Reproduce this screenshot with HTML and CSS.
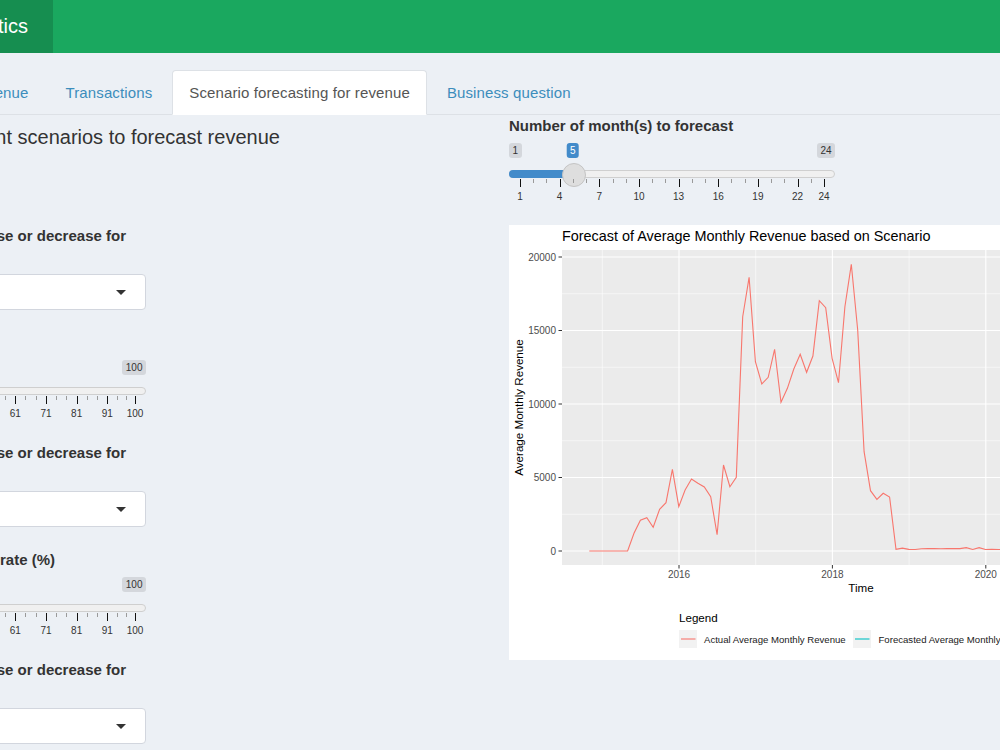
FILE: index.html
```html
<!DOCTYPE html>
<html lang="en">
<head>
  <meta charset="UTF-8" />
  <meta name="viewport" content="width=device-width, initial-scale=1.0"/>
  <title>Revenue Analytics</title>
  <link rel="stylesheet" href="styles.css">
</head>
<body>
  <div class="wrapper">
    <header class="main-header">
      <div class="logo">Analytics</div>
      <nav class="navbar"></nav>
    </header>

    <div class="content">
      <ul class="nav-tabs">
        <li><a href="#">Data overview</a></li>
        <li><a href="#">Revenue</a></li>
        <li><a href="#">Transactions</a></li>
        <li class="active"><a href="#">Scenario forecasting for revenue</a></li>
        <li><a href="#">Business question</a></li>
      </ul>

      <div class="tab-content">
        <div class="col-left">
          <h4 class="scenario-title">Choose from different scenarios to forecast revenue</h4>

          <div class="form-group">
            <label>Select percentage increase or decrease for average order value</label>
            <div class="select"><span>No change</span><span class="caret"></span></div>
          </div>

          <div class="form-group">
            <label>Customer growth (%)</label>
            <div class="slider" data-min="1" data-max="100" data-value="10" data-ticks="1,11,21,31,41,51,61,71,81,91,100">
              <div class="irs-labels"><span class="irs-box">1</span><span class="irs-box irs-single">10</span><span class="irs-box">100</span></div>
              <div class="irs-line"><span class="irs-bar"></span><span class="irs-handle"></span></div>
              <div class="irs-grid"></div>
            </div>
          </div>

          <div class="form-group">
            <label>Select percentage increase or decrease for purchase frequency</label>
            <div class="select"><span>No change</span><span class="caret"></span></div>
          </div>

          <div class="form-group">
            <label>Existing customer churn rate (%)</label>
            <div class="slider" data-min="1" data-max="100" data-value="10" data-ticks="1,11,21,31,41,51,61,71,81,91,100">
              <div class="irs-labels"><span class="irs-box">1</span><span class="irs-box irs-single">10</span><span class="irs-box">100</span></div>
              <div class="irs-line"><span class="irs-bar"></span><span class="irs-handle"></span></div>
              <div class="irs-grid"></div>
            </div>
          </div>

          <div class="form-group">
            <label>Select percentage increase or decrease for customer lifespan</label>
            <div class="select"><span>No change</span><span class="caret"></span></div>
          </div>
        </div>

        <div class="col-right">
          <div class="form-group">
            <label>Number of month(s) to forecast</label>
            <div class="slider" data-min="1" data-max="24" data-value="5" data-ticks="1,4,7,10,13,16,19,22,24">
              <div class="irs-labels"><span class="irs-box">1</span><span class="irs-box irs-single">5</span><span class="irs-box">24</span></div>
              <div class="irs-line"><span class="irs-bar"></span><span class="irs-handle"></span></div>
              <div class="irs-grid"></div>
            </div>
          </div>

          <div class="plot">
            <svg class="chart" width="660" height="435" viewBox="0 0 660 435">
              <text class="chart-title" x="53" y="16">Forecast of Average Monthly Revenue based on Scenario</text>
              <rect x="53" y="25" width="598" height="315" fill="#ebebeb"/>
              <g stroke="#fff" stroke-width="0.55">
                <line x1="53" x2="651" y1="289.25" y2="289.25"/>
                <line x1="53" x2="651" y1="215.75" y2="215.75"/>
                <line x1="53" x2="651" y1="142.25" y2="142.25"/>
                <line x1="53" x2="651" y1="68.75" y2="68.75"/>
                <line x1="93.3" x2="93.3" y1="25" y2="340"/>
                <line x1="246.7" x2="246.7" y1="25" y2="340"/>
                <line x1="400.1" x2="400.1" y1="25" y2="340"/>
                <line x1="553.5" x2="553.5" y1="25" y2="340"/>
              </g>
              <g stroke="#fff" stroke-width="1.1">
                <line x1="53" x2="651" y1="326" y2="326"/>
                <line x1="53" x2="651" y1="252.5" y2="252.5"/>
                <line x1="53" x2="651" y1="179" y2="179"/>
                <line x1="53" x2="651" y1="105.5" y2="105.5"/>
                <line x1="53" x2="651" y1="32" y2="32"/>
                <line x1="170" x2="170" y1="25" y2="340"/>
                <line x1="323.4" x2="323.4" y1="25" y2="340"/>
                <line x1="476.8" x2="476.8" y1="25" y2="340"/>
              </g>
              <polyline id="actual" fill="none" stroke="#f8766d" stroke-width="1.1"/>
              <polyline id="forecast" fill="none" stroke="#00bfc4" stroke-width="1.1"/>

              <g stroke="#333" stroke-width="1">
                <line x1="49.5" x2="53" y1="326" y2="326"/>
                <line x1="49.5" x2="53" y1="252.5" y2="252.5"/>
                <line x1="49.5" x2="53" y1="179" y2="179"/>
                <line x1="49.5" x2="53" y1="105.5" y2="105.5"/>
                <line x1="49.5" x2="53" y1="32" y2="32"/>
                <line x1="170" x2="170" y1="340" y2="343.5"/>
                <line x1="323.4" x2="323.4" y1="340" y2="343.5"/>
                <line x1="476.8" x2="476.8" y1="340" y2="343.5"/>
              </g>
              <g class="axis-text" text-anchor="end">
                <text x="47" y="329.5">0</text>
                <text x="47" y="256">5000</text>
                <text x="47" y="182.5">10000</text>
                <text x="47" y="109">15000</text>
                <text x="47" y="35.5">20000</text>
              </g>
              <g class="axis-text" text-anchor="middle">
                <text x="170" y="352.5">2016</text>
                <text x="323.4" y="352.5">2018</text>
                <text x="476.8" y="352.5">2020</text>
              </g>
              <text class="axis-title" x="352" y="367" text-anchor="middle">Time</text>
              <text class="axis-title" transform="translate(14,182.5) rotate(-90)" text-anchor="middle">Average Monthly Revenue</text>

              <text class="axis-title" x="170" y="397">Legend</text>
              <rect x="170" y="405" width="18" height="18" fill="#f2f2f2"/>
              <line x1="172" x2="186.5" y1="414" y2="414" stroke="#f8766d" stroke-width="1.1"/>
              <text class="legend-text" x="195" y="417.5">Actual Average Monthly Revenue</text>
              <rect x="344" y="405" width="18" height="18" fill="#f2f2f2"/>
              <line x1="346" x2="360.5" y1="414" y2="414" stroke="#00bfc4" stroke-width="1.1"/>
              <text class="legend-text" x="369.5" y="417.5">Forecasted Average Monthly Revenue</text>
            </svg>
          </div>
        </div>
      </div>
    </div>
  </div>

  <script>
    // sliders: grid ticks, bar and handle from data attributes
    document.querySelectorAll(".slider").forEach(function (el) {
      var min = +el.dataset.min, max = +el.dataset.max, value = +el.dataset.value;
      var ticks = el.dataset.ticks.split(",").map(Number);
      var pos = function (v) { return (v - min) / (max - min) * 100; };
      var html = "";
      ticks.forEach(function (t, i) {
        html += '<span class="pol big" style="left:' + pos(t) + '%"></span>';
        html += '<span class="grid-text" style="left:' + pos(t) + '%">' + t + '</span>';
        var next = ticks[i + 1];
        if (next === undefined) return;
        var n = next - t <= 2 ? 1 : 2;
        for (var k = 1; k <= n; k++) {
          html += '<span class="pol" style="left:' + pos(t + (next - t) * k / (n + 1)) + '%"></span>';
        }
      });
      el.querySelector(".irs-grid").innerHTML = html;
      var at = "calc(11px + " + (pos(value) / 100) + " * (100% - 22px))";
      el.querySelector(".irs-single").style.left = at;
      el.querySelector(".irs-handle").style.left = at;
      el.querySelector(".irs-bar").style.width = at;
    });

    // monthly revenue from Nov 2014
    var actual = [0, 0, 0, 0, 0, 0, 0, 1204, 2088, 2265, 1612, 2837, 3286, 5558, 3014, 4150,
      4898, 4605, 4354, 3694, 1109, 5850, 4374, 5014, 15939, 18619, 12878, 11361, 11816,
      13721, 10116, 11068, 12381, 13381, 12156, 13265, 17027, 16552, 13109, 11449, 16619,
      19503, 15034, 6755, 4102, 3517, 3925, 3673, 116, 200, 110, 100, 150, 170, 160, 150,
      160, 170, 160, 230, 100, 230, 100, 110, 100, 100, 90];
    var forecast = [90, 95, 100, 104, 108, 112];

    function toPoints(values, start) {
      return values.map(function (v, i) {
        var x = 80.3 + 6.39 * (start + i);
        var y = 326 - v * 0.0147;
        return x.toFixed(1) + "," + y.toFixed(1);
      }).join(" ");
    }
    document.getElementById("actual").setAttribute("points", toPoints(actual, 0));
    document.getElementById("forecast").setAttribute("points", toPoints(forecast, actual.length - 1));
  </script>
</body>
</html>
```

FILE: styles.css
```css
body { margin: 0; background: #ecf0f5; font-family: "Liberation Sans", Arial, sans-serif; color: #333; overflow: hidden; }
.wrapper { margin-left: -180px; width: 1400px; }

.main-header { display: flex; height: 53px; }
.logo { width: 208px; padding-right: 25px; background: #168e50; color: #fff; font-size: 20px; line-height: 53px; text-align: right; }
.navbar { flex: 1; background: #1aa85f; }

.content { padding-top: 17px; }
.nav-tabs { display: flex; list-style: none; margin: 0 0 0 -3px; padding: 0; border-bottom: 1px solid #dde1e6; }
.nav-tabs li { margin: 0 3px -1px 0; }
.nav-tabs a { display: block; padding: 11px 16px; line-height: 21px; font-size: 15px; letter-spacing: 0.12px; color: #3c8dbc; text-decoration: none; border: 1px solid transparent; border-radius: 4px 4px 0 0; }
.nav-tabs .active a { background: #fff; color: #555; border-color: #dde1e6 #dde1e6 transparent; }

.tab-content { display: grid; grid-template-columns: 689px 1fr; }
.scenario-title { margin: 11px 0 77px; font-size: 20px; line-height: 22px; font-weight: normal; color: #333; }

.form-group { width: 326px; margin-bottom: 22px; }
.form-group label { display: block; font-weight: bold; font-size: 15px; line-height: 21px; margin-bottom: 7px; color: #333; }

.select { display: flex; align-items: center; justify-content: space-between; box-sizing: border-box; height: 36px; padding: 0 19px 0 13px; background: #fff; border: 1px solid #d2d6de; border-radius: 4px; font-size: 15px; }
.caret { border-style: solid; border-width: 5px 5.5px 0; border-color: #333 transparent transparent; }

/* range slider */
.slider { height: 60px; }
.irs-labels { position: relative; display: flex; justify-content: space-between; height: 15px; }
.irs-box { padding: 1px 3.5px; font-size: 10px; line-height: 13px; background: rgba(0,0,0,0.1); color: #333; border-radius: 3px; }
.irs-single { position: absolute; top: 0; transform: translateX(-50%); background: #428bca; color: #fff; }
.irs-line { position: relative; box-sizing: border-box; height: 8px; margin-top: 12px; background: #f0f0f0; border: 1px solid #cfcfcf; border-radius: 16px; }
.irs-bar { position: absolute; left: -1px; top: -1px; height: 8px; background: #428bca; border-radius: 16px 0 0 16px; }
.irs-handle { position: absolute; top: -8px; width: 22px; height: 22px; margin-left: -12px; background: #dedede; border: 1px solid #c4c4c4; border-radius: 50%; }
.irs-grid { position: relative; height: 24px; margin: 1px 11px 0; }
.pol { position: absolute; top: 0; width: 1px; height: 4px; background: #9a9a9a; }
.pol.big { height: 8px; background: #111; }
.grid-text { position: absolute; top: 12px; transform: translateX(-50%); font-size: 10px; line-height: 12px; color: #333; }

/* ggplot output */
.plot { width: 660px; height: 435px; background: #fff; }
.chart { display: block; font-family: "Liberation Sans", Arial, sans-serif; }
.chart-title { font-size: 14.4px; fill: #000; }
.axis-text { font-size: 10px; fill: #4d4d4d; }
.axis-title { font-size: 11.6px; fill: #000; }
.legend-text { font-size: 9.6px; fill: #1a1a1a; }
```
